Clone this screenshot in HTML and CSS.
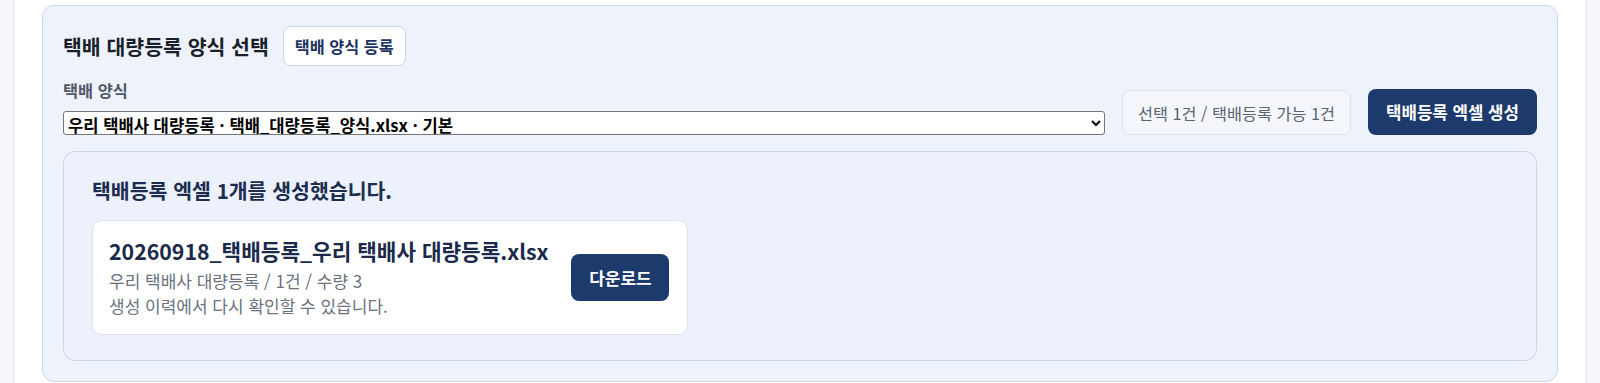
FILE: index.html
```html
<!DOCTYPE html>
<html lang="ko">
<head>
  <meta charset="UTF-8">
  <meta name="viewport" content="width=device-width, initial-scale=1.0">
  <title>택배 대량등록</title>
  <link rel="stylesheet" href="styles.css">
</head>
<body>
  <div class="page">
    <div class="panel">
      <div class="panel-head">
        <h2 class="panel-title">택배 대량등록 양식 선택</h2>
        <a href="javascript:;" class="btn-light">택배 양식 등록</a>
      </div>
      <div class="form-row">
        <label class="field">
          <span class="field-label">택배 양식</span>
          <select class="field-select">
            <option>우리 택배사 대량등록 · 택배_대량등록_양식.xlsx · 기본</option>
          </select>
        </label>
        <div class="count-chip">선택 1건 / 택배등록 가능 1건</div>
        <a href="javascript:;" class="btn-navy btn-make">택배등록 엑셀 생성</a>
      </div>
      <div class="result">
        <h3 class="result-title">택배등록 엑셀 1개를 생성했습니다.</h3>
        <div class="file-card">
          <div class="file-info">
            <div class="file-name">20260918_택배등록_우리 택배사 대량등록.xlsx</div>
            <div class="file-meta">우리 택배사 대량등록 / 1건 / 수량 3</div>
            <div class="file-meta">생성 이력에서 다시 확인할 수 있습니다.</div>
          </div>
          <a href="javascript:;" class="btn-navy btn-down">다운로드</a>
        </div>
      </div>
    </div>
  </div>
</body>
</html>
```

FILE: styles.css
```css
* {
  box-sizing: border-box;
}
body {
  margin: 0;
  background: #f6f8fc;
  font-family: "Noto Sans CJK KR", "Noto Sans", sans-serif;
  color: #1b1f2a;
}
.page {
  margin-left: 13px;
  width: 1574px;
  height: 383px;
  background: #fff;
  border-left: 1px solid #e2e7f0;
  border-right: 1px solid #e2e7f0;
  padding: 5px 28px 0;
}
.panel {
  background: #eef2fb;
  border: 1px solid #cdd7e9;
  border-radius: 12px;
  padding: 20px 20px 20px;
}
.panel-head {
  display: flex;
  align-items: center;
  gap: 14px;
}
.panel-title {
  margin: 0;
  font-size: 20.5px;
  font-weight: 700;
  line-height: 28px;
  color: #1b1f2a;
}
.btn-light {
  display: inline-flex;
  align-items: center;
  height: 40px;
  padding: 0 11px;
  background: #fff;
  border: 1px solid #cdd6e8;
  border-radius: 8px;
  font-size: 16.3px;
  font-weight: 700;
  color: #1d3461;
  text-decoration: none;
}
.form-row {
  display: flex;
  align-items: flex-end;
  gap: 17px;
  margin-top: 13px;
}
.field {
  flex: 1;
  display: flex;
  flex-direction: column;
}
.field-label {
  font-size: 16.4px;
  font-weight: 700;
  line-height: 22px;
  color: #525a68;
  margin-bottom: 10px;
}
.field-select {
  width: 100%;
  height: 24px;
  margin: 0;
  font-family: inherit;
  font-size: 16.6px;
  font-weight: 700;
  color: #000;
  background: #fff;
  border: 1px solid #767676;
  border-radius: 3px;
}
.count-chip {
  display: flex;
  align-items: center;
  height: 45px;
  padding: 0 15px;
  background: #f4f6fb;
  border: 1px solid #dce3ef;
  border-radius: 8px;
  font-size: 16.3px;
  color: #5b6271;
}
.btn-navy {
  display: inline-flex;
  align-items: center;
  justify-content: center;
  background: #1c3a6b;
  color: #fff;
  border-radius: 8px;
  font-weight: 700;
  text-decoration: none;
}
.btn-make {
  height: 46px;
  width: 169px;
  font-size: 16.8px;
}
.result {
  margin-top: 16px;
  background: #edf1fb;
  border: 1px solid #c9d4e8;
  border-radius: 12px;
  padding: 24px 28px 25px;
}
.result-title {
  margin: 0 0 16px;
  font-size: 20.5px;
  font-weight: 700;
  line-height: 28px;
  color: #1c2d50;
}
.file-card {
  display: inline-flex;
  align-items: center;
  gap: 23px;
  background: #fff;
  border: 1px solid #dde3ee;
  border-radius: 10px;
  padding: 15px 18px 16px 16px;
}
.file-name {
  font-size: 21.3px;
  font-weight: 700;
  line-height: 30px;
  color: #1b2a4b;
}
.file-meta {
  font-size: 17px;
  line-height: 25px;
  color: #6b717d;
}
.file-name + .file-meta {
  margin-top: 2px;
}
.btn-down {
  width: 98px;
  height: 47px;
  font-size: 17px;
}
```
